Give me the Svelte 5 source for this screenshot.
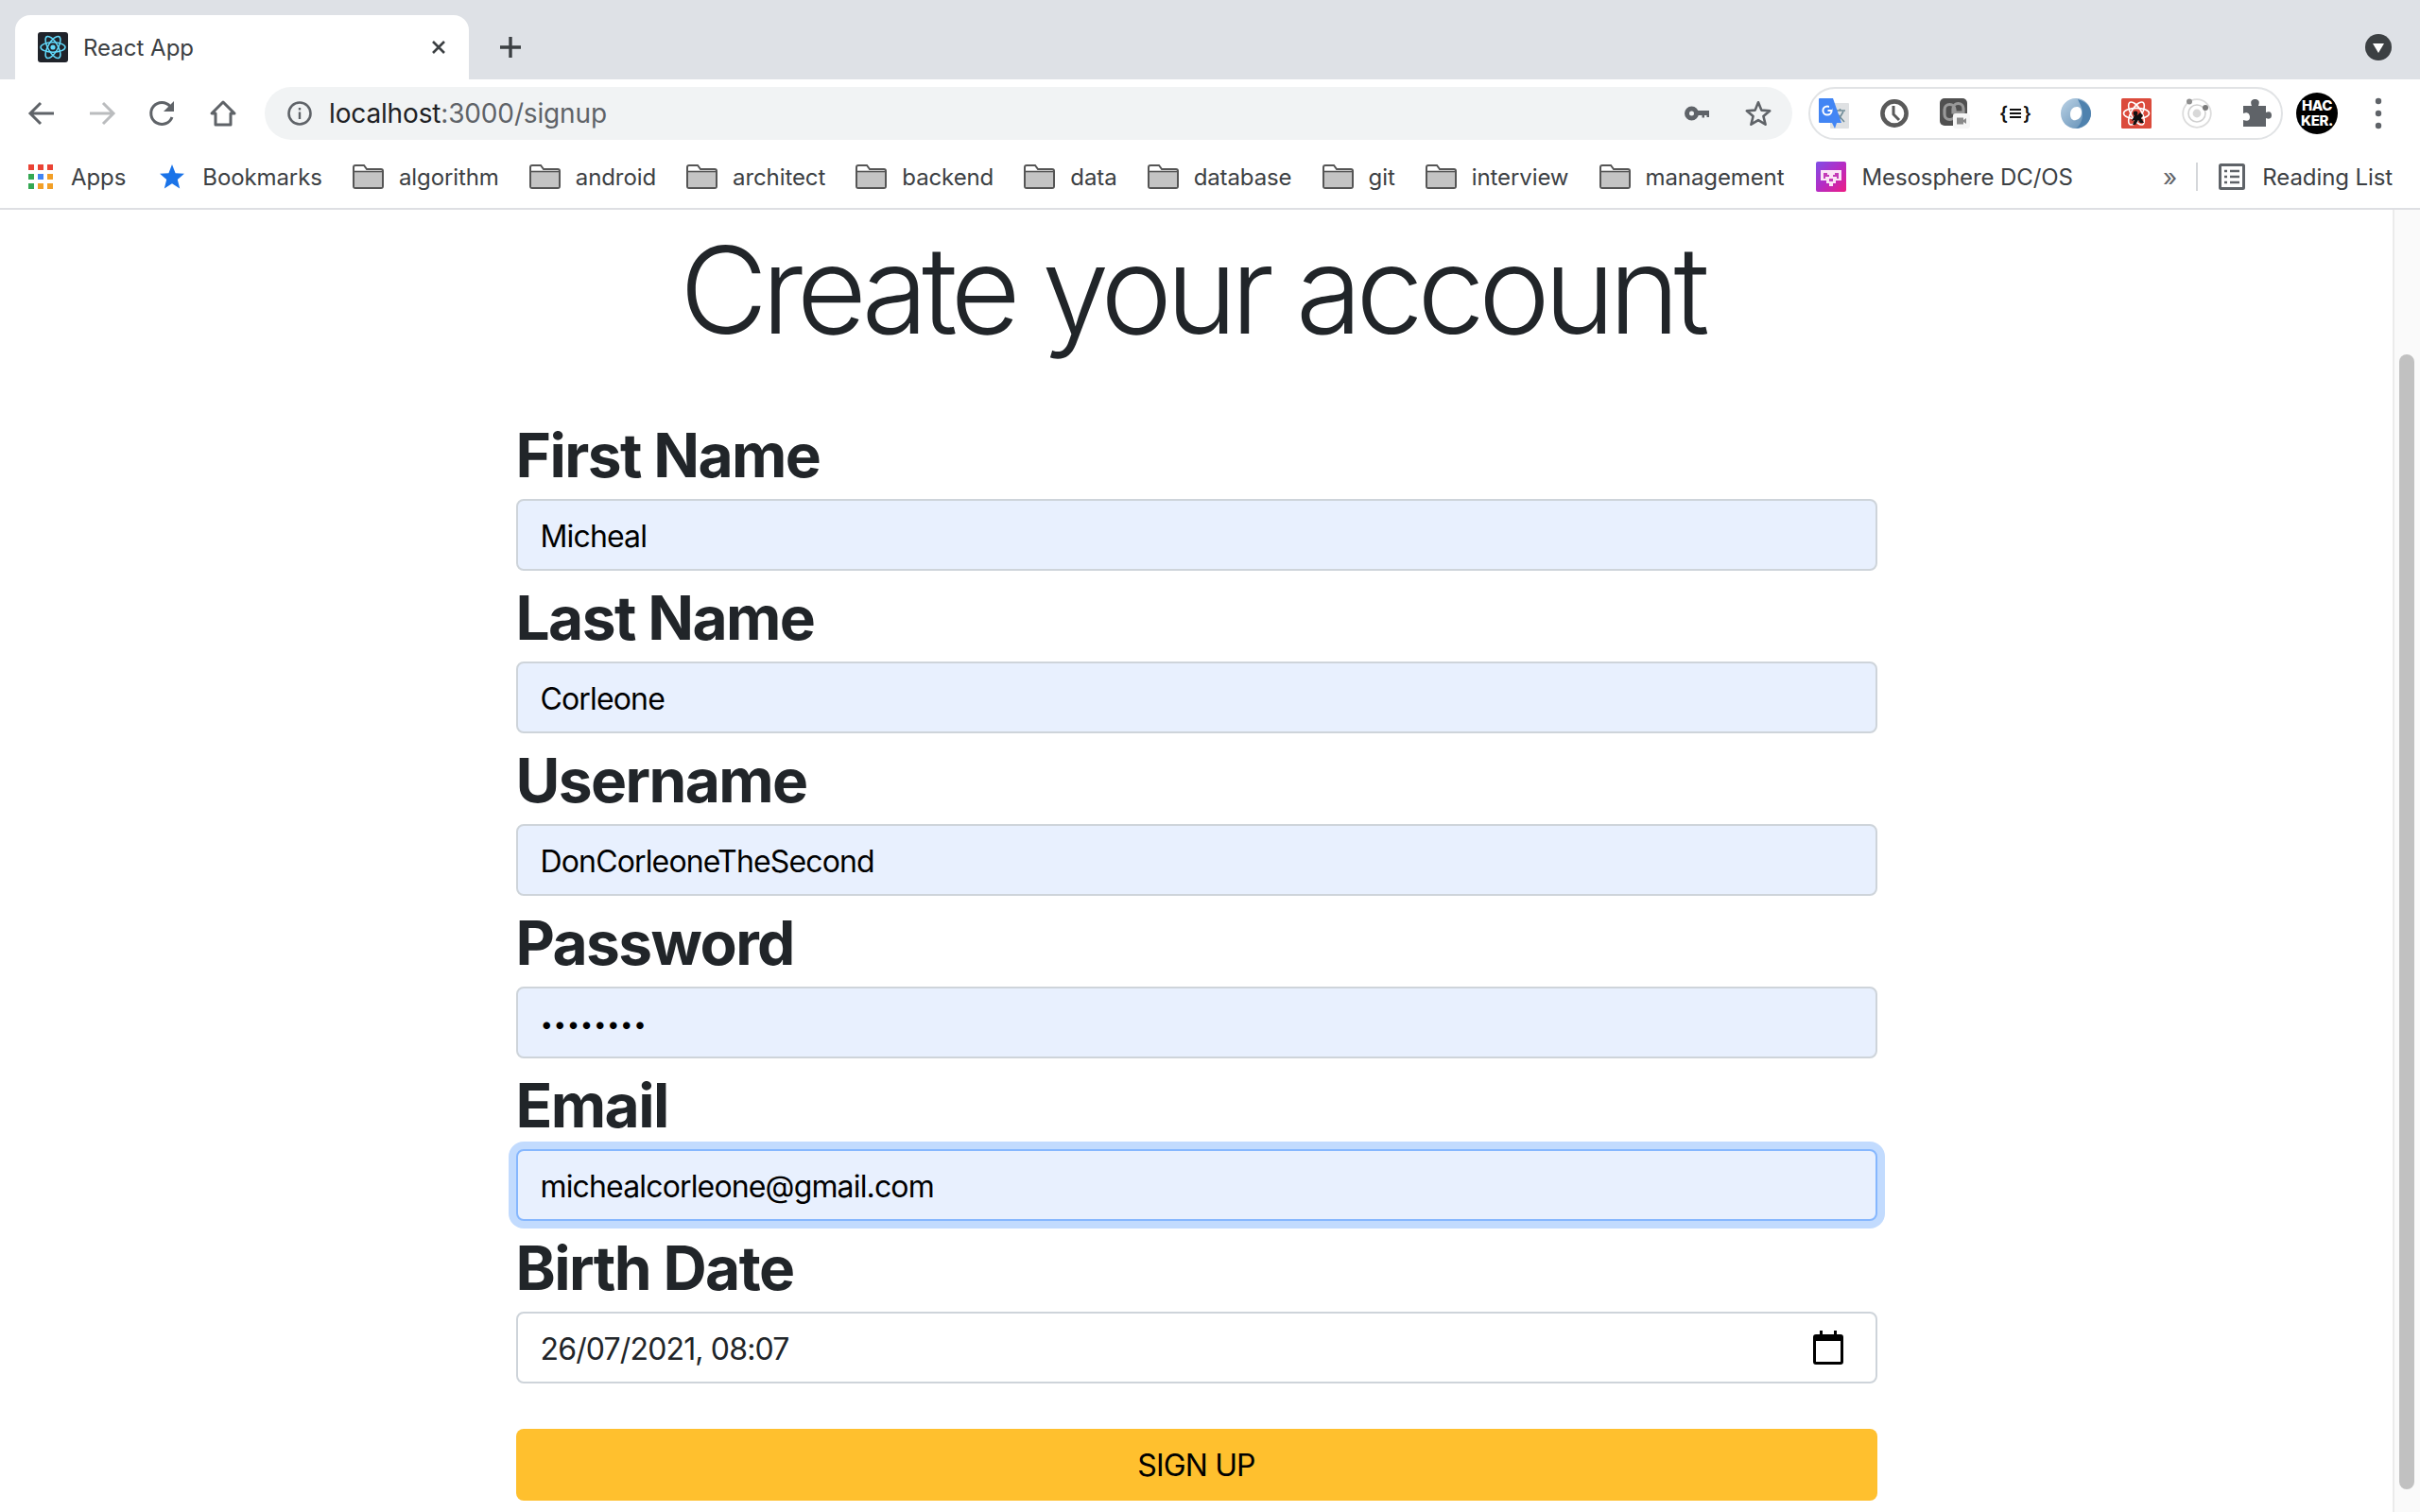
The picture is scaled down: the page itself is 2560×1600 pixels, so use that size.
<script>
    let bookmarks = ["algorithm", "android", "architect", "backend", "data", "database", "git", "interview", "management"];
    let fields = [
        { label: "First Name", type: "text", value: "Micheal", filled: true },
        { label: "Last Name", type: "text", value: "Corleone", filled: true },
        { label: "Username", type: "text", value: "DonCorleoneTheSecond", filled: true },
        { label: "Password", type: "password", value: "corleone", filled: true },
        { label: "Email", type: "email", value: "michealcorleone@gmail.com", filled: true, focus: true },
        { label: "Birth Date", type: "text", value: "26/07/2021, 08:07", date: true }
    ];
</script>

<div class="window">
    <div class="tabstrip">
        <div class="tab">
            <svg class="favicon" viewBox="0 0 32 32">
                <rect width="32" height="32" rx="3" fill="#20232a" />
                <g fill="none" stroke="#61dafb" stroke-width="1.5">
                    <ellipse cx="16" cy="16" rx="13" ry="5.2" />
                    <ellipse cx="16" cy="16" rx="13" ry="5.2" transform="rotate(60 16 16)" />
                    <ellipse cx="16" cy="16" rx="13" ry="5.2" transform="rotate(120 16 16)" />
                </g>
                <circle cx="16" cy="16" r="2.6" fill="#61dafb" />
            </svg>
            <span class="tab-title">React App</span>
            <svg class="tab-close" viewBox="0 0 16 16"><path d="M2 2 14 14M14 2 2 14" stroke="#3c4043" stroke-width="2.6" /></svg>
        </div>
        <svg class="new-tab" viewBox="0 0 24 24"><path d="M12 1V23M1 12H23" stroke="#3c4043" stroke-width="3.4" /></svg>
        <span class="grow"></span>
        <svg class="tab-search" viewBox="0 0 28 28">
            <circle cx="14" cy="14" r="14" fill="#3c4043" />
            <path d="M8 10H20L14 20Z" fill="#fff" />
        </svg>
    </div>

    <div class="toolbar">
        <svg class="nav" viewBox="0 0 32 32"><path d="M29 16H5M15 5 4 16 15 27" fill="none" stroke="#5f6368" stroke-width="3" /></svg>
        <svg class="nav" viewBox="0 0 32 32"><path d="M3 16H27M17 5 28 16 17 27" fill="none" stroke="#babcbe" stroke-width="3" /></svg>
        <svg class="nav" viewBox="0 0 32 32">
            <path d="M26 20A11.5 11.5 0 1 1 24 8.5" fill="none" stroke="#5f6368" stroke-width="3" />
            <path d="M28 3V14H17Z" fill="#5f6368" />
        </svg>
        <svg class="nav" viewBox="0 0 32 32"><path d="M16 4 4 16H8V28H24V16H28ZM16 4" fill="none" stroke="#5f6368" stroke-width="3" stroke-linejoin="round" /></svg>
        <div class="omnibox">
            <svg class="info" viewBox="0 0 28 28">
                <circle cx="14" cy="14" r="11.5" fill="none" stroke="#5f6368" stroke-width="2.6" />
                <path d="M14 12.5V20M14 8V10.4" stroke="#5f6368" stroke-width="2.4" />
            </svg>
            <span class="url">localhost<span class="url-dim">:3000/signup</span></span>
            <span class="grow"></span>
            <svg class="key" viewBox="0 0 26 16">
                <circle cx="7.5" cy="8" r="5" fill="none" stroke="#5f6368" stroke-width="5" />
                <path d="M13 5H26V12H23.5V10H21V12.5H18.5V10H13Z" fill="#5f6368" />
            </svg>
            <svg class="star-outline" viewBox="0 0 32 32"><path d="M16 3.5 19.6 12.4 29 13.1 21.8 19.2 24.1 28.5 16 23.5 7.9 28.5 10.2 19.2 3 13.1 12.4 12.4Z" fill="none" stroke="#5f6368" stroke-width="2.8" stroke-linejoin="round" /></svg>
        </div>
        <div class="extensions">
            <svg class="ext" viewBox="0 0 32 32">
                <rect x="12" y="5" width="20" height="27" rx="1" fill="#dfe1e3" />
                <path d="M17 13H28M22.5 11V13.5M19.5 25 26 14M20 17 27 25" fill="none" stroke="#6f8c98" stroke-width="1.6" />
                <path d="M1 0H15L24 26H19L17 32 14 26H1A1 1 0 0 1 0 25V1A1 1 0 0 1 1 0Z" fill="#4285f4" />
                <circle cx="9" cy="13" r="4.6" fill="none" stroke="#fff" stroke-width="2" />
                <path d="M9.5 13H14" stroke="#fff" stroke-width="2" />
                <rect x="11" y="8" width="3" height="4" fill="#4285f4" />
            </svg>
            <svg class="ext" viewBox="0 0 32 32">
                <circle cx="16" cy="16" r="12.6" fill="#fff" stroke="#5a5a5a" stroke-width="4.6" />
                <path d="M15 8V17L21 23" fill="none" stroke="#5a5a5a" stroke-width="3" />
            </svg>
            <svg class="ext" viewBox="0 0 32 32">
                <rect width="29" height="29" rx="5" fill="#505050" />
                <path d="M5 12A5.5 5.5 0 0 1 16 12V17A5.5 5.5 0 0 1 5 17ZM14 11A5.5 5.5 0 0 1 25 11V15H14Z" fill="none" stroke="#999" stroke-width="3.2" />
                <rect x="14" y="16" width="18" height="16" rx="3" fill="#f6f6f6" />
                <path d="M18 20.5H25V23L28 21V27L25 25V27.5H18Z" fill="#8a8a8a" />
            </svg>
            <span class="ext-json">&#123;<svg class="json-lines" viewBox="0 0 14 12"><path d="M1 2H13M1 6H13M1 10H13" stroke="#111" stroke-width="1.8" /></svg>&#125;</span>
            <svg class="ext" viewBox="0 0 32 32">
                <defs>
                    <linearGradient id="ring" x1="0" y1="0" x2="1" y2="1"><stop offset="0" stop-color="#bcd3e6" /><stop offset="1" stop-color="#5c8ab2" /></linearGradient>
                </defs>
                <path d="M16 0C25 0 32 7 32 16S25 32 16 32C7 32 0 25 0 16S7 0 16 0ZM17 9C13 9 10 12 10 17S13 24 16 23C20 22 22 19 22 15S20 9 17 9Z" fill="url(#ring)" fill-rule="evenodd" />
                <path d="M18 1C26 3 32 9 32 16S26 31 16 32C20 29 23 24 23 17S21 8 18 1Z" fill="#4f82ae" />
            </svg>
            <svg class="ext" viewBox="0 0 32 32">
                <rect width="32" height="32" rx="1.5" fill="#db4b3c" />
                <g fill="none" stroke="#fff" stroke-width="1.6">
                    <ellipse cx="16" cy="16" rx="13.5" ry="5.6" />
                    <ellipse cx="16" cy="16" rx="13.5" ry="5.6" transform="rotate(60 16 16)" />
                    <ellipse cx="16" cy="16" rx="13.5" ry="5.6" transform="rotate(120 16 16)" />
                </g>
                <circle cx="15" cy="16" r="2.4" fill="#111" />
                <path d="M14 18H17L20 15 23 18 21 21 24 26H20L18 23 15 28H12L14 23 11 24Z" fill="#111" />
            </svg>
            <svg class="ext" viewBox="0 0 32 32">
                <circle cx="16" cy="16" r="14.8" fill="none" stroke="#dcdcdc" stroke-width="1.8" />
                <circle cx="16" cy="16" r="9" fill="none" stroke="#d0d0d0" stroke-width="1.6" />
                <circle cx="16" cy="16" r="4.4" fill="#d8d8d8" />
                <circle cx="8" cy="3.6" r="3" fill="#8f8f8f" />
                <circle cx="25" cy="10" r="3" fill="#7a7a7a" />
            </svg>
            <svg class="ext" viewBox="0 0 32 32">
                <path d="M1 8H10C8 3 10 1 13.5 1S19 3 17 8H25V15C30 13 31 16 31 18S30 23 25 21V30H1V23C6 25 8 23 8 20S6 14 1 16Z" fill="#5f6368" />
            </svg>
        </div>
        <div class="avatar"><span>HAC<br />KER.</span></div>
        <svg class="kebab" viewBox="0 0 8 36"><circle cx="4" cy="5" r="3.2" fill="#5f6368" /><circle cx="4" cy="18" r="3.2" fill="#5f6368" /><circle cx="4" cy="31" r="3.2" fill="#5f6368" /></svg>
    </div>

    <div class="bookmarks">
        <div class="bm bm-apps">
            <svg class="apps" viewBox="0 0 26 26">
                <rect width="6" height="6" fill="#ea4335" /><rect x="10" width="6" height="6" fill="#ea4335" /><rect x="20" width="6" height="6" fill="#ea4335" />
                <rect y="10" width="6" height="6" fill="#34a853" /><rect x="10" y="10" width="6" height="6" fill="#4285f4" /><rect x="20" y="10" width="6" height="6" fill="#f29f27" />
                <rect y="20" width="6" height="6" fill="#34a853" /><rect x="10" y="20" width="6" height="6" fill="#f29f27" /><rect x="20" y="20" width="6" height="6" fill="#f29f27" />
            </svg>
            <span>Apps</span>
        </div>
        <div class="bm bm-stars">
            <svg class="bm-star" viewBox="0 0 28 28"><path d="M14 1 17.6 10.2 27 10.7 19.8 16.9 22.2 26.5 14 21.2 5.8 26.5 8.2 16.9 1 10.7 10.4 10.2Z" fill="#1a73e8" /></svg>
            <span>Bookmarks</span>
        </div>
        {#each bookmarks as name}
            <div class="bm">
                <svg class="folder" viewBox="0 0 33 26">
                    <path d="M1 3A2 2 0 0 1 3 1H12L15 5H30A2 2 0 0 1 32 7V23A2 2 0 0 1 30 25H3A2 2 0 0 1 1 23Z" fill="#fff" stroke="#555" stroke-width="2" />
                    <rect x="2" y="8" width="29" height="16" fill="#c4c4c4" />
                    <path d="M2 7.5H31" stroke="#555" stroke-width="1.6" />
                </svg>
                <span>{name}</span>
            </div>
        {/each}
        <div class="bm bm-meso">
            <svg class="meso" viewBox="0 0 32 32">
                <defs>
                    <linearGradient id="meso" x1="0" y1="0" x2="1" y2="1"><stop offset="0" stop-color="#7f4fe6" /><stop offset="0.5" stop-color="#b52cc4" /><stop offset="1" stop-color="#ee1c83" /></linearGradient>
                </defs>
                <rect width="32" height="32" rx="2" fill="url(#meso)" />
                <path d="M5 9H27V20H21V23H18V26H14V23H11V20H5Z" fill="#fbe6f6" />
                <path d="M8 12H12V14H14V16H10V18H8ZM20 12H24V18H22V16H18V14H20ZM14 18H18V21H14Z" fill="#c43cb8" />
            </svg>
            <span>Mesosphere DC/OS</span>
        </div>
        <span class="grow"></span>
        <span class="chevrons">»</span>
        <span class="divider"></span>
        <div class="bm bm-reading">
            <svg class="reading" viewBox="0 0 28 28">
                <rect x="1.5" y="1.5" width="25" height="25" rx="1" fill="none" stroke="#5f6368" stroke-width="3" />
                <path d="M6 8H9M12 8H22M6 14H9M12 14H22M6 20H9M12 20H22" stroke="#5f6368" stroke-width="2.4" />
            </svg>
            <span>Reading List</span>
        </div>
    </div>

    <div class="page">
        <main class="content">
            <h1>Create your account</h1>
            <form on:submit|preventDefault>
                {#each fields as f}
                    <label class="field">
                        <span class="field-label">{f.label}</span>
                        <span class="control">
                            <input class:filled={f.filled} class:focus={f.focus} class:secret={f.type === "password"} type={f.type} value={f.value} />
                            {#if f.date}
                                <svg class="calendar" viewBox="0 0 32 36">
                                    <path d="M7 0H10V4H22V0H25V4H29A3 3 0 0 1 32 7V33A3 3 0 0 1 29 36H3A3 3 0 0 1 0 33V7A3 3 0 0 1 3 4H7ZM3 11V33H29V11Z" fill="#000" fill-rule="evenodd" />
                                </svg>
                            {/if}
                        </span>
                    </label>
                {/each}
                <button type="submit">SIGN UP</button>
            </form>
        </main>
        <div class="scrollbar"><div class="thumb"></div></div>
    </div>
</div>

<style>
    :global(body) {
        margin: 0;
        background: #fff;
        overflow: hidden;
    }
    .window {
        width: 2560px;
        height: 1600px;
        display: flex;
        flex-direction: column;
        overflow: hidden;
        font-family: Inter, "Liberation Sans", sans-serif;
    }
    .grow {
        flex: 1;
    }

    /* tab strip */
    .tabstrip {
        height: 84px;
        flex: none;
        box-sizing: border-box;
        padding: 16px 30px 0 16px;
        background: #dee1e6;
        display: flex;
        align-items: center;
    }
    .tab {
        width: 480px;
        height: 68px;
        box-sizing: border-box;
        padding: 0 24px 0 24px;
        background: #fff;
        border-radius: 16px 16px 0 0;
        display: flex;
        align-items: center;
    }
    .favicon {
        width: 32px;
        height: 32px;
        margin-right: 16px;
    }
    .tab-title {
        flex: 1;
        font-size: 24px;
        color: #3c4043;
    }
    .tab-close {
        width: 16px;
        height: 16px;
    }
    .new-tab {
        width: 24px;
        height: 24px;
        margin-left: 32px;
    }
    .tab-search {
        width: 28px;
        height: 28px;
    }

    /* toolbar */
    .toolbar {
        height: 80px;
        flex: none;
        box-sizing: border-box;
        padding: 0 28px 8px;
        display: flex;
        align-items: center;
        background: #fff;
    }
    .nav {
        width: 32px;
        height: 32px;
        margin-right: 32px;
    }
    .nav:nth-child(4) {
        margin-right: 28px;
    }
    .omnibox {
        width: 1616px;
        height: 56px;
        box-sizing: border-box;
        padding: 0 21px 0 23px;
        border-radius: 28px;
        background: #f1f3f4;
        display: flex;
        align-items: center;
    }
    .info {
        width: 28px;
        height: 28px;
        margin-right: 17px;
    }
    .url {
        font-size: 28px;
        letter-spacing: -0.15px;
        color: #202124;
    }
    .url-dim {
        color: #5f6368;
    }
    .key {
        width: 26px;
        height: 16px;
        margin-right: 37px;
    }
    .star-outline {
        width: 30px;
        height: 30px;
    }
    .extensions {
        width: 502px;
        height: 56px;
        margin-left: 17px;
        box-sizing: border-box;
        border: 2px solid #e1e3e5;
        border-radius: 28px;
        display: grid;
        grid-template-columns: repeat(8, 64px);
        justify-content: center;
        align-items: center;
        justify-items: center;
    }
    .ext {
        width: 32px;
        height: 32px;
    }
    .ext-json {
        display: flex;
        align-items: center;
        gap: 1px;
        font-size: 20px;
        font-weight: 600;
        color: #111;
    }
    .json-lines {
        width: 14px;
        height: 12px;
    }
    .avatar {
        width: 44px;
        height: 44px;
        margin-left: 14px;
        border-radius: 50%;
        background: #000;
        color: #fff;
        display: flex;
        align-items: center;
        justify-content: center;
        font-size: 15px;
        font-weight: 800;
        letter-spacing: -0.4px;
        line-height: 16px;
        text-align: center;
    }
    .kebab {
        width: 8px;
        height: 36px;
        margin-left: 39px;
    }

    /* bookmarks bar */
    .bookmarks {
        height: 58px;
        flex: none;
        box-sizing: border-box;
        padding: 0 29px 10px 30px;
        border-bottom: 2px solid #dedfe3;
        display: flex;
        align-items: center;
        gap: 32.1px;
        background: #fff;
        font-size: 24px;
        letter-spacing: -0.1px;
        color: #3c4043;
    }
    .bm {
        display: flex;
        align-items: center;
        gap: 16px;
        white-space: nowrap;
    }
    .bm-apps {
        gap: 19px;
    }
    .bm-stars {
        margin-left: 3px;
        gap: 18px;
    }
    .bm-meso {
        margin-left: 1px;
        gap: 17px;
    }
    .apps {
        width: 26px;
        height: 26px;
    }
    .bm-star {
        width: 28px;
        height: 28px;
    }
    .folder {
        width: 33px;
        height: 26px;
    }
    .meso {
        width: 32px;
        height: 32px;
    }
    .chevrons {
        font-size: 26px;
        color: #5f6368;
        margin-right: -12.5px;
    }
    .divider {
        width: 2px;
        height: 30px;
        background: #d5d7da;
        margin-right: -9.5px;
    }
    .bm-reading {
        gap: 18px;
    }
    .reading {
        width: 28px;
        height: 28px;
    }

    /* page */
    .page {
        flex: 1;
        min-height: 0;
        display: flex;
    }
    .content {
        flex: 1;
        min-width: 0;
        display: flex;
        flex-direction: column;
        align-items: center;
        color: #212529;
    }
    h1 {
        margin: 8px 10px 48px 0;
        font-size: 128px;
        font-weight: 350;
        letter-spacing: -6.7px;
        line-height: 1.2;
        white-space: nowrap;
    }
    form {
        width: 1440px;
        display: flex;
        flex-direction: column;
    }
    .field {
        display: flex;
        flex-direction: column;
    }
    .field-label {
        padding-top: 3px;
        font-size: 64px;
        font-weight: 700;
        letter-spacing: -1.6px;
        line-height: 93px;
    }
    .control {
        position: relative;
        display: block;
    }
    input {
        display: block;
        width: 100%;
        height: 76px;
        box-sizing: border-box;
        padding: 3px 24px 0;
        border: 2px solid #ced4da;
        border-radius: 8px;
        background: #fff;
        font-family: inherit;
        font-size: 32px;
        letter-spacing: -0.85px;
        color: #212529;
        outline: none;
    }
    input.filled {
        background: #e8f0fe;
        color: #000;
    }
    input.secret {
        font-size: 24px;
        letter-spacing: 0.6px;
    }
    input.focus {
        border-color: #86b7fe;
        box-shadow: 0 0 0 8px #c2dbfe;
    }
    .calendar {
        position: absolute;
        right: 36px;
        top: 20px;
        width: 32px;
        height: 36px;
    }
    button {
        margin-top: 48px;
        height: 76px;
        padding-top: 3px;
        border: none;
        border-radius: 8px;
        background: #ffc02e;
        font-family: inherit;
        font-size: 32px;
        letter-spacing: -0.85px;
        color: #000;
    }
    .scrollbar {
        width: 29px;
        flex: none;
        box-sizing: border-box;
        border-left: 2px solid #ebebeb;
        background: #fafafa;
        padding: 153px 6px 0 5px;
    }
    .thumb {
        height: 1201px;
        background: #c1c1c1;
        border-radius: 8px;
    }
</style>
